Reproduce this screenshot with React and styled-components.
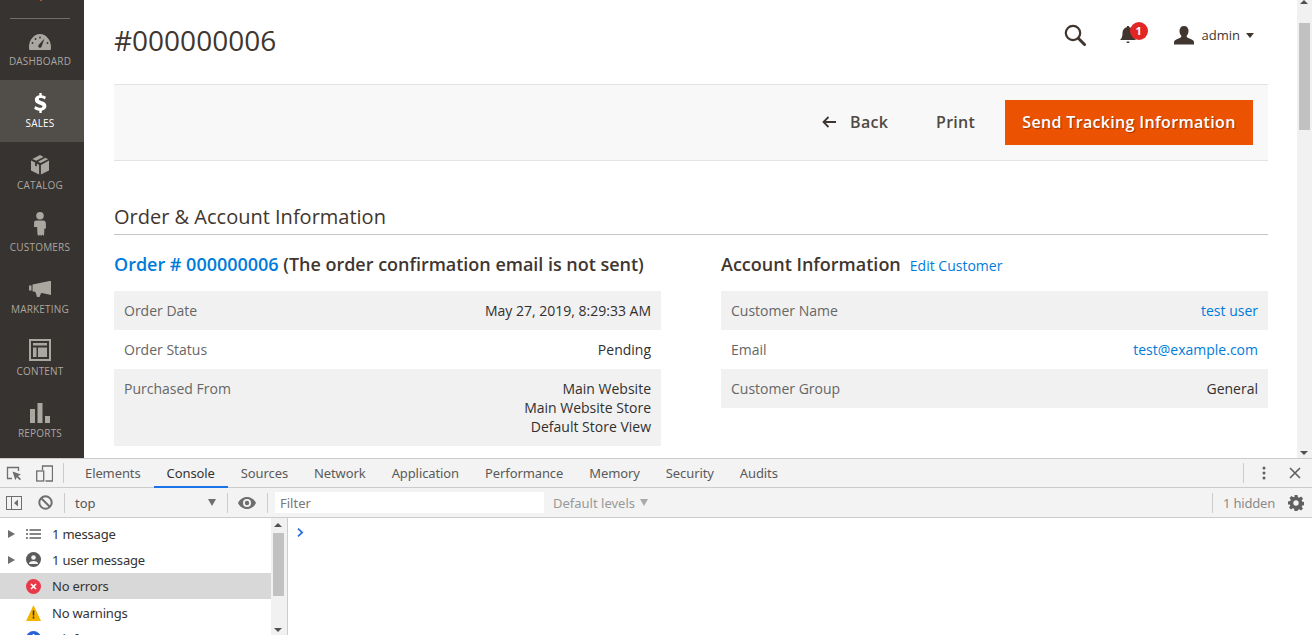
import React from 'react';
import styled, { createGlobalStyle } from 'styled-components';

const Global = createGlobalStyle`
  html, body { margin: 0; padding: 0; height: 100%; overflow: hidden; background: #fff; }
  #root { height: 100%; }
  * { box-sizing: border-box; }
`;

const Page = styled.div`
  width: 1312px; height: 635px; display: flex; flex-direction: column; overflow: hidden;
  font-family: "Open Sans", sans-serif; color: #303030;
`;
const TopPane = styled.div`height: 458px; display: flex; flex: none; overflow: hidden;`;
const Sidebar = styled.nav`
  width: 84px; flex: none; background: #373330; padding-top: 18px; position: relative;
`;
const LogoDot = styled.div`position: absolute; left: 40px; top: 0; width: 2px; height: 1px; background: #c8502a;`;
const SideRule = styled.div`height: 1px; width: 60px; margin: 0 0 -1px 10px; background: #736e69;`;
const SideItem = styled.div`
  height: 62px; display: flex; flex-direction: column; align-items: center; padding-right: 4px;
  background: ${p => (p.$active ? '#514d48' : 'transparent')};
  color: ${p => (p.$active ? '#fff' : '#aaa6a0')};
`;
const SideIcon = styled.div`
  height: 24px; margin-top: 11px; display: flex; align-items: center; justify-content: center;
  transform: translateY(${p => p.$dy || 0}px);
`;
const SideLabel = styled.div`font-size: 10px; line-height: 14px; margin-top: 1px; letter-spacing: 0.2px;`;

const Main = styled.main`flex: 1; min-width: 0; padding: 0 29px 0 30px;`;
const Header = styled.header`height: 84px; display: flex; align-items: center; justify-content: space-between;`;
const Title = styled.h1`margin: -4px 0 0; font-size: 28px; line-height: 36px; font-weight: 400; color: #41362f;`;
const Actions = styled.div`display: flex; align-items: center; margin: -14px 14px 0 0;`;
const Badge = styled.span`
  position: absolute; left: 11px; top: -3px; width: 18px; height: 18px; border-radius: 50%;
  background: #e22626; color: #fff; font-size: 11px; font-weight: 700; line-height: 18px; text-align: center;
`;
const BellWrap = styled.div`position: relative; width: 20px; height: 20px; margin: 0 35px 0 33px;`;
const UserName = styled.span`font-size: 13px; color: #41362f; margin: 0 6px 0 8px;`;
const Caret = styled.span`width: 0; height: 0; border: 4px solid transparent; border-top: 5px solid #41362f; border-bottom: 0;`;

const Toolbar = styled.div`
  height: 77px; background: #f8f8f8; border-top: 1px solid #e3e3e3; border-bottom: 1px solid #e3e3e3;
  display: flex; align-items: center; justify-content: flex-end; padding-right: 15px;
`;
const TextBtn = styled.span`
  display: inline-flex; align-items: center; gap: 14px; font-size: 16px; font-weight: 600; color: #514943;
  letter-spacing: 0.25px; line-height: 20px; margin: -2px ${p => p.$mr}px 0 0;
`;
const Primary = styled.button`
  width: 248px; height: 45px; background: #eb5202; border: 0; color: #fff; padding: 0 0 2px;
  font: 600 16px "Open Sans", sans-serif; letter-spacing: 0.33px; text-shadow: 1px 1px 1px rgba(0,0,0,.35);
`;

const SectionTitle = styled.h2`
  margin: 42px 0 0; height: 32px; border-bottom: 1px solid #c5c5c5; font-size: 20px; line-height: 27px; font-weight: 400; color: #41362f;
`;
const Columns = styled.div`display: grid; grid-template-columns: 547px 547px; column-gap: 60px; margin-top: 17px;`;
const ColTitle = styled.div`height: 39px; font-size: 18px; line-height: 25px; font-weight: 600; color: #41362f; white-space: nowrap; letter-spacing: -0.02px;`;
const AccountTitle = styled(ColTitle)`display: flex; align-items: baseline; gap: 9px; letter-spacing: 0;`;
const Link = styled.a`color: #007bdb; text-decoration: none; font-weight: ${p => p.$w || 400}; font-size: ${p => p.$s || 14}px;`;
const Row = styled.div`
  display: flex; justify-content: space-between; padding: 10px; font-size: 14px; line-height: 19px;
  background: ${p => (p.$alt ? '#f1f1f1' : '#fff')};
`;
const RowLabel = styled.span`color: #666;`;
const RowValue = styled.span`text-align: right; color: #303030;`;

const PageScroll = styled.div`
  width: 15px; flex: none; background: #f1f1f1; display: flex; flex-direction: column; align-items: center; position: relative;
`;
const ScrollThumb = styled.div`width: 11px; height: 107px; background: #c1c1c1; margin-top: 23px;`;
const Arrow = styled.span`
  position: absolute; left: 3px; width: 0; height: 0; border: 4px solid transparent;
  ${p => (p.$up ? 'top: 0px; border-top: 0; border-bottom: 4px solid #505050;' : 'bottom: 3px; border-bottom: 0; border-top: 4px solid #505050;')}
`;

const Dev = styled.section`
  flex: 1; min-height: 0; display: flex; flex-direction: column; border-top: 1px solid #ccc;
  font-family: "Noto Sans", sans-serif; font-size: 13px; color: #333;
`;
const DevTabs = styled.div`height: 29px; flex: none; background: #f3f3f3; border-bottom: 1px solid #ccc; display: flex; align-items: center; position: relative;`;
const DevIconBtn = styled.span`width: ${p => p.$w || 28}px; height: 28px; display: flex; align-items: center; justify-content: center; flex: none;`;
const VRule = styled.span`width: 1px; height: ${p => p.$h || 20}px; background: #ccc; flex: none; margin: ${p => p.$m || '0'};`;
const Tab = styled.span`
  height: 28px; display: flex; align-items: center; padding: 0 13px; letter-spacing: -0.1px; color: ${p => (p.$active ? '#333' : '#5a5a5a')};
  border-bottom: ${p => (p.$active ? '2px solid #1a73e8' : '0')}; flex: none; margin-top: ${p => (p.$active ? '1px' : '0')};
`;
const TabGap = styled.span`width: 8px; flex: none;`;
const Spacer = styled.span`flex: 1;`;
const EndGap = styled.span`width: 6px; flex: none;`;
const DevBar = styled.div`height: 30px; flex: none; background: #f3f3f3; border-bottom: 1px solid #ccc; display: flex; align-items: center;`;
const ContextSel = styled.div`width: 162px; display: flex; align-items: center; justify-content: space-between; padding: 0 11px 0 10px; color: #555; flex: none;`;
const DownTri = styled.span`width: 0; height: 0; border: 4px solid transparent; border-top: 7px solid ${p => p.$c || '#6e6e6e'}; border-bottom: 0;`;
const Filter = styled.div`width: 269px; height: 21px; margin-left: 7px; background: #fff; color: #777; padding-left: 5px; line-height: 22px; flex: none;`;
const Levels = styled.div`display: flex; align-items: center; gap: 5px; color: #999; margin-left: 9px; flex: none;`;
const Hidden = styled.span`color: #8a8a8a; margin: 0 9px 0 10px; flex: none; letter-spacing: -0.2px;`;
const GearGap = styled.span`width: 4px; flex: none;`;
const DevBody = styled.div`flex: 1; min-height: 0; display: flex; overflow: hidden;`;
const SidePane = styled.div`width: 288px; flex: none; border-right: 1px solid #ccc; display: flex; overflow: hidden; position: relative;`;
const MsgList = styled.div`width: 271px; flex: none; padding-top: 2.5px;`;
const Msg = styled.div`
  height: 26.3px; display: flex; align-items: center; padding-left: ${p => (p.$arrow ? 8 : 26)}px; letter-spacing: -0.2px;
  background: ${p => (p.$sel ? '#d8d8d8' : 'transparent')}; color: #333; white-space: nowrap;
`;
const RightTri = styled.span`width: 0; height: 0; border: 4px solid transparent; border-left: 7px solid #6e6e6e; border-right: 0; margin-right: 11px;`;
const MsgIcon = styled.span`width: 15px; height: 16px; display: flex; align-items: center; justify-content: center; margin-right: 11px; flex: none;`;
const MiniScroll = styled.div`width: 16px; flex: none; background: #f1f1f1; position: relative;`;
const MiniThumb = styled.div`position: absolute; left: 2px; top: 15px; width: 11px; height: 63px; background: #c1c1c1;`;
const MiniUp = styled(Arrow)`top: 5px;`;
const Console = styled.div`flex: 1; background: #fff; padding: 5px 0 0 9px;`;

const Dashboard = () => (
  <svg width="22" height="16" viewBox="0 0 22 16"><path fill="currentColor" fillRule="evenodd" d="M.3 16C.1 15 0 14 0 13 0 6 5 0 11 0s11 6 11 13c0 1-.1 2-.3 3zM15.500 4.500 10 10.500c-1 1-.8 2.500 0 3 .9.600 2.100.2 2.500-.8z"/><g fill="#373330"><circle cx="11" cy="3.500" r=".9"/><circle cx="6.500" cy="5" r=".9"/><circle cx="3.500" cy="9" r=".9"/><circle cx="18.500" cy="9" r=".9"/></g></svg>
);
const Box = () => (
  <svg width="18" height="20" viewBox="0 0 20 22"><path fill="currentColor" d="M10 0 14 2 5.800 6.300 1.500 4.200zM16 3l3 1.600-8.300 4.200-3-1.500zM0 6l4.500 2.300v3.500l2 1v-3.500L9 11v10.500L0 17zM20 6v11l-9 4.500V11z"/></svg>
);
const Person = () => (
  <svg width="12" height="24" viewBox="0 0 12 24"><circle cx="6" cy="3.800" r="3.800" fill="currentColor"/><path fill="currentColor" d="M2.500 8.500h7c1.300 0 2.200 1 2.300 2.300l.2 5.700h-1.600l-.4 7.500-1.500-1.500-1.500 1.500-1-1.500-1 1.500-1.500-1.500-.4-7.500H0l.2-5.700C.3 9.500 1.200 8.500 2.500 8.500z"/></svg>
);
const Megaphone = () => (
  <svg width="22" height="16" viewBox="0 0 22 16"><path fill="currentColor" d="M0 4.500h2.500v5H0zM3.500 3.500 20.500 0H22v14l-9-2-1 .2L10.500 16H8L6.500 11l-3-.8z"/></svg>
);
const ContentIco = () => (
  <svg width="22" height="22" viewBox="0 0 22 22"><path fill="currentColor" fillRule="evenodd" d="M0 0h22v22H0zM2 2v18h18V2zM4 4h14v2.500H4zM4 8.500h3.500V18H4zM9 8.500h9V18H9z"/></svg>
);
const Bars = () => (
  <svg width="20" height="20" viewBox="0 0 20 20"><path fill="currentColor" d="M0 6h5v14H0zM7.500 0h5v20h-5zM15 13h5v7h-5z"/></svg>
);
const Dollar = () => (
  <svg width="13" height="20" viewBox="0 0 14 22"><path fill="currentColor" d="M5.700 0h2.600v2.600c1.800.2 3.400.7 4.700 1.500l-1.200 3c-1.500-.9-3.300-1.500-4.600-1.500-1.400 0-2.100.5-2.100 1.300 0 2.300 8.400 1.500 8.400 7.500 0 2.700-2 4.600-5.200 5V22H5.700v-2.600c-2.200-.2-4.200-1-5.700-2.200l1.300-3c1.500 1.200 3.800 2.100 5.500 2.100 1.500 0 2.400-.5 2.400-1.500 0-2.500-8.400-1.600-8.400-7.400 0-2.600 1.900-4.400 4.900-4.800z"/></svg>
);
const Search = () => (
  <svg width="22" height="22" viewBox="0 0 22 22"><circle cx="9" cy="9" r="7.200" fill="none" stroke="#41362f" strokeWidth="2.200"/><path d="M14.300 14.300 20.500 20.500" stroke="#41362f" strokeWidth="3" strokeLinecap="round"/></svg>
);
const Bell = () => (
  <svg width="18" height="20" viewBox="0 0 18 20"><path fill="#41362f" d="M9 1c.8 0 1.300.5 1.400 1.200C13 3 14.500 5.200 14.500 8c0 3.500.8 5.500 2.500 7H1c1.700-1.500 2.500-3.500 2.500-7 0-2.800 1.500-5 4.100-5.800C7.700 1.500 8.200 1 9 1zM7.500 16.500h3c0 1-.7 1.500-1.500 1.500s-1.500-.5-1.500-1.500z"/></svg>
);
const User = () => (
  <svg width="20" height="19" viewBox="0 0 20 19"><path fill="#41362f" d="M10 0c3 0 4.500 2 4.500 5 0 2-.7 3.700-2 5 .3 1.300 1 1.800 3 2.500 2.500.9 4 1.700 4.500 3.500v2.500H0V16c.5-1.800 2-2.600 4.500-3.500 2-.7 2.700-1.200 3-2.500-1.300-1.300-2-3-2-5 0-3 1.500-5 4.500-5z"/></svg>
);
const BackArrow = () => (
  <svg width="14" height="12" viewBox="0 0 14 12"><path d="M14 6H2M6.500 1 1.500 6l5 5" fill="none" stroke="#41362f" strokeWidth="1.800"/></svg>
);
const Inspect = () => (
  <svg width="16" height="16" viewBox="0 0 16 16"><path d="M6 13.500H1.500v-11h11V6" fill="none" stroke="#6e6e6e" strokeWidth="1.300"/><path fill="#6e6e6e" d="M6.500 6.500 15 9.500 12 11l3 3-1.200 1.200-3-3-1.500 3z"/></svg>
);
const Device = () => (
  <svg width="17" height="17" viewBox="0 0 17 17"><path d="M6.500 5V1h10v15h-7" fill="none" stroke="#6e6e6e" strokeWidth="1.300"/><rect x=".7" y="6" width="7" height="10" fill="none" stroke="#6e6e6e" strokeWidth="1.300"/></svg>
);
const Kebab = () => (
  <svg width="4" height="14" viewBox="0 0 4 14"><g fill="#5f5f5f"><circle cx="2" cy="2" r="1.500"/><circle cx="2" cy="7" r="1.500"/><circle cx="2" cy="12" r="1.500"/></g></svg>
);
const Close = () => (
  <svg width="12" height="12" viewBox="0 0 12 12"><path d="M1 1l10 10M11 1 1 11" stroke="#5f5f5f" strokeWidth="1.600"/></svg>
);
const Sidebar2 = () => (
  <svg width="16" height="14" viewBox="0 0 16 14"><rect x=".5" y=".5" width="15" height="13" fill="none" stroke="#6e6e6e"/><path d="M5.500 0v14" stroke="#6e6e6e"/><path fill="#6e6e6e" d="M12 3.500v7L8 7z"/></svg>
);
const Ban = () => (
  <svg width="15" height="15" viewBox="0 0 15 15"><circle cx="7.500" cy="7.500" r="6.200" fill="none" stroke="#6e6e6e" strokeWidth="2"/><path d="M3 3l9 9" stroke="#6e6e6e" strokeWidth="2"/></svg>
);
const Eye = () => (
  <svg width="18" height="12" viewBox="0 0 18 12"><path fill="#6e6e6e" fillRule="evenodd" d="M9 0c4 0 7.300 2.500 9 6-1.700 3.500-5 6-9 6S1.700 9.500 0 6c1.700-3.500 5-6 9-6zm0 2a4 4 0 1 0 0 8 4 4 0 0 0 0-8zm0 1.800a2.200 2.200 0 1 1 0 4.400 2.200 2.200 0 0 1 0-4.400z"/></svg>
);
const Gear = () => (
  <svg width="16" height="16" viewBox="0 0 16 16"><path fill="#5f5f5f" fillRule="evenodd" d="M6.500 0h3l.4 2.200 1.300.6L13 1.500l2 2-1.300 1.900.6 1.300 2.200.4v3l-2.200.4-.6 1.300 1.300 1.800-2 2-1.800-1.300-1.300.6L9.500 16h-3l-.4-2.200-1.300-.6L3 14.500l-2-2 1.300-1.800-.6-1.300L0 9.500v-3l2.200-.4.6-1.300L1.500 3l2-2 1.800 1.300 1.300-.6zM8 5.300a2.700 2.700 0 1 0 0 5.400 2.700 2.700 0 0 0 0-5.400z"/></svg>
);
const ListIco = () => (
  <svg width="15" height="10" viewBox="0 0 15 10"><path d="M3.500 1H15M3.500 5H15M3.500 9H15M0 1h2M0 5h2M0 9h2" stroke="#5f5f5f" strokeWidth="1.400"/></svg>
);
const UserIco = () => (
  <svg width="15" height="15" viewBox="0 0 15 15"><circle cx="7.500" cy="7.500" r="7.500" fill="#5a5a5a"/><circle cx="7.500" cy="5.500" r="2.300" fill="#f3f3f3"/><path fill="#f3f3f3" d="M3 11.500c.5-1.800 2.300-2.500 4.500-2.500s4 .7 4.500 2.500v.6H3z"/></svg>
);
const ErrIco = () => (
  <svg width="15" height="15" viewBox="0 0 15 15"><circle cx="7.500" cy="7.500" r="7.500" fill="#e8394a"/><path d="M5 5l5 5M10 5l-5 5" stroke="#fff" strokeWidth="1.600"/></svg>
);
const WarnIco = () => (
  <svg width="15" height="16" viewBox="0 0 15 16"><path fill="#f4b400" d="M7.500 0 15 16H0z"/><path d="M7.500 5.500v5M7.500 11.500v2" stroke="#333" strokeWidth="1.500"/></svg>
);
const InfoIco = () => (
  <svg width="15" height="15" viewBox="0 0 15 15"><circle cx="7.500" cy="7.500" r="7.500" fill="#2962d9"/><path d="M7.500 3v2M7.500 6.500v5.500" stroke="#fff" strokeWidth="1.600"/></svg>
);
const Prompt = () => (
  <svg width="7" height="9" viewBox="0 0 7 9"><path d="M1 .7 5.200 4.500 1 8.300" fill="none" stroke="#2a6fe0" strokeWidth="1.700"/></svg>
);

const nav = [
  ['DASHBOARD', <Dashboard key="d" />, false, 1],
  ['SALES', <Dollar key="s" />, true, 0],
  ['CATALOG', <Box key="c" />, false, 0],
  ['CUSTOMERS', <Person key="u" />, false, -3],
  ['MARKETING', <Megaphone key="m" />, false, 0],
  ['CONTENT', <ContentIco key="o" />, false, -1],
  ['REPORTS', <Bars key="r" />, false, 0],
];
const tabs = ['Elements', 'Console', 'Sources', 'Network', 'Application', 'Performance', 'Memory', 'Security', 'Audits'];

export default function App() {
  return (
    <Page>
      <Global />
      <TopPane>
        <Sidebar>
          <LogoDot />
          <SideRule />
          {nav.map(([label, icon, active, dy]) => (
            <SideItem key={label} $active={active}>
              <SideIcon $dy={dy}>{icon}</SideIcon>
              <SideLabel>{label}</SideLabel>
            </SideItem>
          ))}
        </Sidebar>
        <Main>
          <Header>
            <Title>#000000006</Title>
            <Actions>
              <Search />
              <BellWrap><Bell /><Badge>1</Badge></BellWrap>
              <User />
              <UserName>admin</UserName>
              <Caret />
            </Actions>
          </Header>
          <Toolbar>
            <TextBtn $mr={48}><BackArrow />Back</TextBtn>
            <TextBtn $mr={30}>Print</TextBtn>
            <Primary>Send Tracking Information</Primary>
          </Toolbar>
          <SectionTitle>Order &amp; Account Information</SectionTitle>
          <Columns>
            <div>
              <ColTitle><Link $w={600} $s={18}>Order # 000000006</Link> (The order confirmation email is not sent)</ColTitle>
              <Row $alt><RowLabel>Order Date</RowLabel><RowValue>May 27, 2019, 8:29:33 AM</RowValue></Row>
              <Row><RowLabel>Order Status</RowLabel><RowValue>Pending</RowValue></Row>
              <Row $alt><RowLabel>Purchased From</RowLabel><RowValue>Main Website<br />Main Website Store<br />Default Store View</RowValue></Row>
            </div>
            <div>
              <AccountTitle>Account Information <Link>Edit Customer</Link></AccountTitle>
              <Row $alt><RowLabel>Customer Name</RowLabel><RowValue><Link>test user</Link></RowValue></Row>
              <Row><RowLabel>Email</RowLabel><RowValue><Link>test@example.com</Link></RowValue></Row>
              <Row $alt><RowLabel>Customer Group</RowLabel><RowValue>General</RowValue></Row>
            </div>
          </Columns>
        </Main>
        <PageScroll><Arrow $up /><ScrollThumb /><Arrow /></PageScroll>
      </TopPane>
      <Dev>
        <DevTabs>
          <DevIconBtn $w={28}><Inspect /></DevIconBtn>
          <DevIconBtn $w={32}><Device /></DevIconBtn>
          <VRule $m="0 0 0 3px" />
          <TabGap />
          {tabs.map(t => <Tab key={t} $active={t === 'Console'}>{t}</Tab>)}
          <Spacer />
          <VRule />
          <DevIconBtn $w={40}><Kebab /></DevIconBtn>
          <DevIconBtn $w={22}><Close /></DevIconBtn>
          <EndGap />
        </DevTabs>
        <DevBar>
          <DevIconBtn $w={28}><Sidebar2 /></DevIconBtn>
          <DevIconBtn $w={34}><Ban /></DevIconBtn>
          <VRule $m="0 0 0 2px" />
          <ContextSel>top<DownTri /></ContextSel>
          <VRule />
          <DevIconBtn $w={38}><Eye /></DevIconBtn>
          <VRule $m="0 0 0 1px" />
          <Filter>Filter</Filter>
          <Levels>Default levels<DownTri $c="#aaa" /></Levels>
          <Spacer />
          <VRule />
          <Hidden>1 hidden</Hidden>
          <DevIconBtn $w={24}><Gear /></DevIconBtn>
          <GearGap />
        </DevBar>
        <DevBody>
          <SidePane>
            <MsgList>
              <Msg $arrow><RightTri /><MsgIcon><ListIco /></MsgIcon>1 message</Msg>
              <Msg $arrow><RightTri /><MsgIcon><UserIco /></MsgIcon>1 user message</Msg>
              <Msg $sel><MsgIcon><ErrIco /></MsgIcon>No errors</Msg>
              <Msg><MsgIcon><WarnIco /></MsgIcon>No warnings</Msg>
              <Msg><MsgIcon><InfoIco /></MsgIcon>1 info</Msg>
            </MsgList>
            <MiniScroll><MiniThumb /><MiniUp $up /><Arrow /></MiniScroll>
          </SidePane>
          <Console><Prompt /></Console>
        </DevBody>
      </Dev>
    </Page>
  );
}
